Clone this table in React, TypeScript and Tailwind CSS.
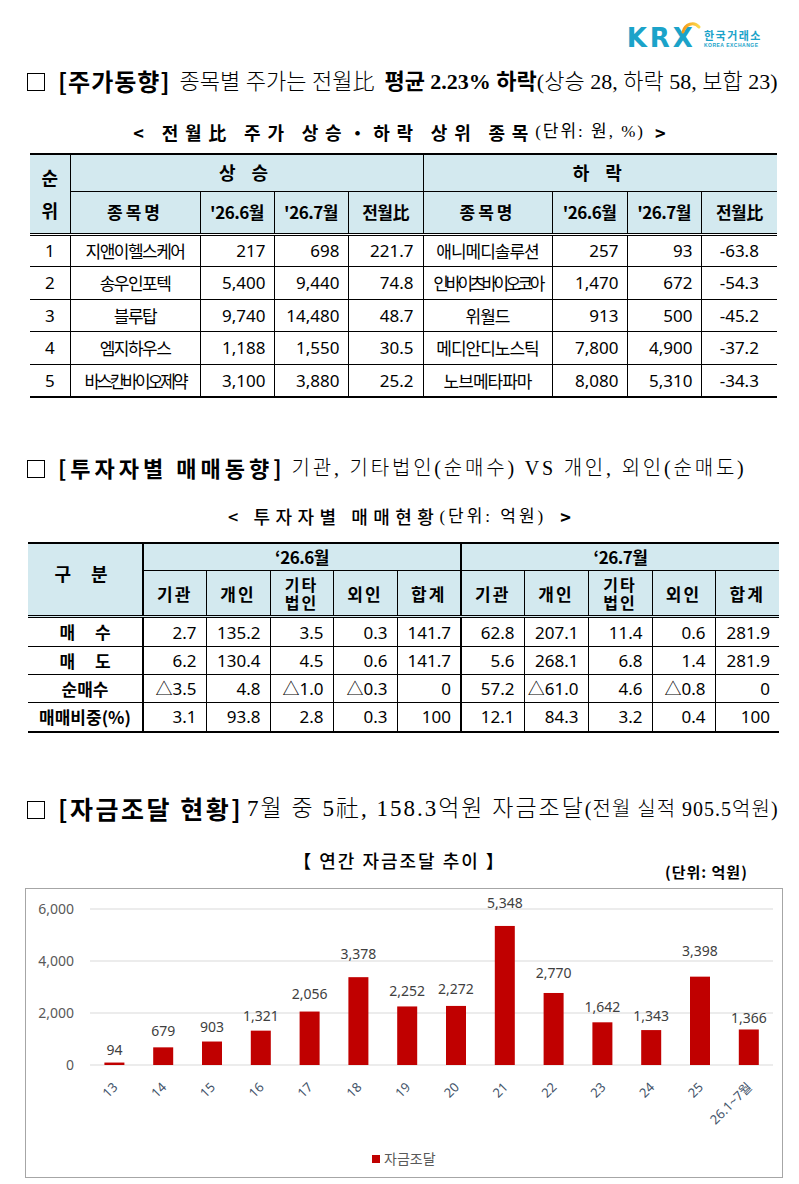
import React from "react";

const KR = "font-['Noto_Sans_CJK_KR',sans-serif]";
const MIX = "font-['Liberation_Serif','Noto_Sans_CJK_KR',serif]";
const NUM = "font-['Noto_Sans','Noto_Sans_CJK_KR',sans-serif]";

const HEAD_BG = "bg-[#d3e9ef]";

type Rise = { rank: number; name: string; jun: string; jul: string; pct: string; tight?: boolean };

const rise: Rise[] = [
  { rank: 1, name: "지앤이헬스케어", jun: "217", jul: "698", pct: "221.7" },
  { rank: 2, name: "송우인포텍", jun: "5,400", jul: "9,440", pct: "74.8" },
  { rank: 3, name: "블루탑", jun: "9,740", jul: "14,480", pct: "48.7" },
  { rank: 4, name: "엠지하우스", jun: "1,188", jul: "1,550", pct: "30.5" },
  { rank: 5, name: "바스칸바이오제약", jun: "3,100", jul: "3,880", pct: "25.2", tight: true },
];

const fall: Omit<Rise, "rank">[] = [
  { name: "애니메디솔루션", jun: "257", jul: "93", pct: "-63.8" },
  { name: "인바이츠바이오코아", jun: "1,470", jul: "672", pct: "-54.3", tight: true },
  { name: "위월드", jun: "913", jul: "500", pct: "-45.2" },
  { name: "메디안디노스틱", jun: "7,800", jul: "4,900", pct: "-37.2" },
  { name: "노브메타파마", jun: "8,080", jul: "5,310", pct: "-34.3" },
];

const investors = [
  { label: "매 수", wide: true, jun: ["2.7", "135.2", "3.5", "0.3", "141.7"], jul: ["62.8", "207.1", "11.4", "0.6", "281.9"] },
  { label: "매 도", wide: true, jun: ["6.2", "130.4", "4.5", "0.6", "141.7"], jul: ["5.6", "268.1", "6.8", "1.4", "281.9"] },
  { label: "순매수", jun: ["△3.5", "4.8", "△1.0", "△0.3", "0"], jul: ["57.2", "△61.0", "4.6", "△0.8", "0"] },
  { label: "매매비중(%)", jun: ["3.1", "93.8", "2.8", "0.3", "100"], jul: ["12.1", "84.3", "3.2", "0.4", "100"] },
];

const funding = [
  { x: "13", v: 94, ly: 1046 },
  { x: "14", v: 679, ly: 1027 },
  { x: "15", v: 903, ly: 1023 },
  { x: "16", v: 1321, ly: 1012 },
  { x: "17", v: 2056, ly: 990 },
  { x: "18", v: 3378, ly: 950 },
  { x: "19", v: 2252, ly: 987 },
  { x: "20", v: 2272, ly: 985 },
  { x: "21", v: 5348, ly: 899 },
  { x: "22", v: 2770, ly: 969 },
  { x: "23", v: 1642, ly: 1003 },
  { x: "24", v: 1343, ly: 1012 },
  { x: "25", v: 3398, ly: 947 },
  { x: "26.1~7월", v: 1366, ly: 1014 },
];

function Logo() {
  return (
    <div className="flex items-start">
      <div className="relative">
        <span className="font-['DejaVu_Sans',sans-serif] text-[26px] font-bold leading-[24px] tracking-[3px] text-[#1ba3c9]">
          KRX
        </span>
        <svg className="absolute -top-[6px] right-[-6px]" width="22" height="18" viewBox="0 0 22 18">
          <defs>
            <linearGradient id="arc" x1="0" y1="0" x2="1" y2="0">
              <stop offset="0" stopColor="#f39a1a" />
              <stop offset="1" stopColor="#fcd94c" />
            </linearGradient>
          </defs>
          <path d="M3 12 C5 4 14 1 19 7" fill="none" stroke="url(#arc)" strokeWidth="3" strokeLinecap="round" />
        </svg>
      </div>
      <div className="flex flex-col items-start pt-[3px] pl-[8px]">
        <span className={`${KR} text-[11px] font-bold leading-[12px] tracking-[1.5px] text-[#1ba3c9]`}>한국거래소</span>
        <span className="font-['Liberation_Sans',sans-serif] text-[5px] font-bold leading-[8px] tracking-[0.5px] text-[#1ba3c9]">
          KOREA EXCHANGE
        </span>
      </div>
    </div>
  );
}

function Box() {
  return <span className="mr-[13px] inline-block h-[18px] w-[18px] translate-y-[1px] border border-black" />;
}

function Th({
  children,
  className = "",
  colSpan,
  rowSpan,
}: {
  children: React.ReactNode;
  className?: string;
  colSpan?: number;
  rowSpan?: number;
}) {
  return (
    <th
      colSpan={colSpan}
      rowSpan={rowSpan}
      className={`${HEAD_BG} border border-black p-0 text-center font-bold text-black ${className}`}
    >
      {children}
    </th>
  );
}

function Td({ children, className = "" }: { children: React.ReactNode; className?: string }) {
  return <td className={`border border-black p-0 text-black ${className}`}>{children}</td>;
}

function PriceTable() {
  const cols = [40, 130, 74, 74, 75, 129, 75, 74, 76];
  return (
    <table className={`ml-[30px] w-[747px] table-fixed border-collapse ${KR}`}>
      <colgroup>
        {cols.map((w, i) => (
          <col key={i} style={{ width: w }} />
        ))}
      </colgroup>
      <thead>
        <tr className="h-[37px]">
          <Th rowSpan={2} className="border-t-2 border-b-[3px] border-l-0 border-double text-[18px] leading-[33px]">
            순<br />위
          </Th>
          <Th colSpan={4} className="border-t-2 border-t-black text-[18px] tracking-[6px]">
            상 승
          </Th>
          <Th colSpan={4} className="border-t-2 border-r-0 text-[18px] tracking-[6px]">
            하 락
          </Th>
        </tr>
        <tr className="h-[43px] text-[17px]">
          {["종목명", "'26.6월", "'26.7월", "전월比", "종목명", "'26.6월", "'26.7월", "전월比"].map((t, i) => (
            <Th
              key={i}
              className={`border-b-[3px] border-double ${i === 7 ? "border-r-0" : ""} ${
                t === "종목명" ? "tracking-[3px]" : "tracking-[-0.5px]"
              }`}
            >
              {t}
            </Th>
          ))}
        </tr>
      </thead>
      <tbody className="text-[17px]">
        {rise.map((r, i) => {
          const f = fall[i];
          const last = i === rise.length - 1 ? "border-b-2" : "";
          return (
            <tr key={r.rank} className="h-[32.6px]">
              <Td className={`border-l-0 text-center ${NUM} ${last}`}>{r.rank}</Td>
              <Td className={`text-center whitespace-nowrap ${r.tight ? "tracking-[-3px]" : "tracking-[-1.5px]"} ${last}`}>
                {r.name}
              </Td>
              <Td className={`pr-[8px] text-right ${NUM} ${last}`}>{r.jun}</Td>
              <Td className={`pr-[8px] text-right ${NUM} ${last}`}>{r.jul}</Td>
              <Td className={`pr-[9px] text-right ${NUM} ${last}`}>{r.pct}</Td>
              <Td className={`text-center whitespace-nowrap ${f.tight ? "tracking-[-3.6px]" : "tracking-[-1px]"} ${last}`}>
                {f.name}
              </Td>
              <Td className={`pr-[8px] text-right ${NUM} ${last}`}>{f.jun}</Td>
              <Td className={`pr-[8px] text-right ${NUM} ${last}`}>{f.jul}</Td>
              <Td className={`border-r-0 text-center ${NUM} ${last}`}>{f.pct}</Td>
            </tr>
          );
        })}
      </tbody>
    </table>
  );
}

function InvestorTable() {
  const cols = [115, 63, 64, 63, 64, 64, 63, 64, 64, 63, 64];
  const sub = ["기관", "개인", "기타\n법인", "외인", "합계"];
  return (
    <table className={`ml-[28px] w-[751px] table-fixed border-collapse ${KR}`}>
      <colgroup>
        {cols.map((w, i) => (
          <col key={i} style={{ width: w }} />
        ))}
      </colgroup>
      <thead>
        <tr className="h-[28px]">
          <Th rowSpan={2} className="border-t-2 border-r-2 border-b-[3px] border-l-0 border-double text-[18px] tracking-[8px]">
            <span className="relative -top-[6px]">구 분</span>
          </Th>
          <Th colSpan={5} className="border-t-2 border-r-2 text-[17px] tracking-[-0.5px]">
            ‘26.6월
          </Th>
          <Th colSpan={5} className="border-t-2 border-r-0 text-[17px] tracking-[-0.5px]">
            ‘26.7월
          </Th>
        </tr>
        <tr className="h-[46px] text-[17px]">
          {[...sub, ...sub].map((t, i) => (
            <Th
              key={i}
              className={`border-b-[3px] border-double tracking-[2px] ${i === 4 ? "border-r-2" : ""} ${
                i === 9 ? "border-r-0" : ""
              }`}
            >
              {t.includes("\n") ? (
                <span className="flex flex-col items-center text-[16px] leading-[18px]">
                  <span>기타</span>
                  <span>법인</span>
                </span>
              ) : (
                t
              )}
            </Th>
          ))}
        </tr>
      </thead>
      <tbody className="text-[17px]">
        {investors.map((r, i) => {
          const last = i === investors.length - 1 ? "border-b-2" : "";
          return (
            <tr key={r.label} className={i === 0 ? "h-[30px]" : i === 3 ? "h-[29px]" : "h-[28px]"}>
              <Td
                className={`border-l-0 border-r-2 text-center font-bold ${
                  r.wide ? "tracking-[8px] pl-[8px]" : "tracking-[0px]"
                } leading-[20px] ${last}`}
              >
                {r.label}
              </Td>
              {r.jun.map((v, j) => (
                <Td key={`a${j}`} className={`pr-[9px] text-right ${NUM} ${j === 4 ? "border-r-2" : ""} ${last}`}>
                  {v}
                </Td>
              ))}
              {r.jul.map((v, j) => (
                <Td key={`b${j}`} className={`pr-[9px] text-right ${NUM} ${j === 4 ? "border-r-0" : ""} ${last}`}>
                  {v}
                </Td>
              ))}
            </tr>
          );
        })}
      </tbody>
    </table>
  );
}

function FundingChart() {
  const x0 = 90;
  const step = 48.8;
  const y = (v: number) => 1061 - v * 0.026;
  const ticks = [0, 2000, 4000, 6000];
  return (
    <div className="mx-[25px] h-[290px] w-[758px] border border-[#a6a6a6] bg-white">
      <svg width="756" height="288" viewBox="26 885 756 288" className="block">
        {ticks.map((t) => (
          <g key={t}>
            <line x1={x0} x2={773} y1={y(t)} y2={y(t)} stroke="#d9d9d9" strokeWidth="1" />
            <text
              x={74}
              y={y(t) + 5}
              textAnchor="end"
              fontSize="14"
              fill="#595959"
              fontFamily="'Noto Sans', sans-serif"
            >
              {t.toLocaleString("en-US")}
            </text>
          </g>
        ))}
        {funding.map((d, i) => {
          const cx = x0 + (i + 0.5) * step;
          return (
            <g key={d.x}>
              <rect x={cx - 10} y={y(d.v)} width={20} height={1061 - y(d.v)} fill="#c00000" />
              <text
                x={cx}
                y={d.ly + 5}
                textAnchor="middle"
                fontSize="14"
                fill="#404040"
                fontFamily="'Noto Sans', sans-serif"
              >
                {d.v.toLocaleString("en-US")}
              </text>
              <text
                x={cx + 4}
                y={1084}
                textAnchor="end"
                fontSize="13"
                fill="#44546a"
                fontFamily="'Noto Sans','Noto Sans CJK KR', sans-serif"
                transform={`rotate(-45 ${cx + 4} 1084)`}
              >
                {d.x}
              </text>
            </g>
          );
        })}
        <rect x={372} y={1151} width={8} height={8} fill="#c00000" />
        <text x={384} y={1160} fontSize="14" fill="#595959" fontFamily="'Noto Sans CJK KR', sans-serif">
          자금조달
        </text>
      </svg>
    </div>
  );
}

export default function App() {
  return (
    <div className="relative h-[1184px] w-[799px] bg-white text-black">
      {/* Logo */}
      <div className="flex h-[56px] items-start justify-end pr-[37px] pt-[26px]">
        <Logo />
      </div>

      {/* Section 1 */}
      <div className={`flex h-[50px] items-center whitespace-nowrap pl-[27px] ${MIX} text-[22px]`}>
        <Box />
        <span className={`${KR} text-[24px] font-bold tracking-[1px]`}>[주가동향]</span>
        <span className="ml-[9px] font-light tracking-[0px]">종목별 주가는 전월比</span>
        <span className="ml-[10px] font-bold tracking-[0px]">평균 2.23% 하락</span>
        <span className="font-light tracking-[0px]">(상승 28, 하락 58, 보합 23)</span>
      </div>
      <div className={`flex h-[47px] items-center justify-center whitespace-nowrap pt-[5px] ${MIX}`}>
        <span className={`${KR} text-[18px] font-bold tracking-[6.8px]`}>{"< 전월比 주가 상승・하락 상위 종목"}</span>
        <span className="text-[17px] tracking-[2px]">(단위: 원, %)</span>
        <span className={`${KR} ml-[10px] text-[18px] font-bold`}>{">"}</span>
      </div>
      <PriceTable />

      {/* Section 2 */}
      <div className={`mt-[46px] flex h-[48px] items-center whitespace-nowrap pl-[27px] ${MIX} text-[20px]`}>
        <Box />
        <span className={`${KR} text-[22px] font-bold tracking-[4px]`}>[투자자별 매매동향]</span>
        <span className="ml-[6px] font-light tracking-[2.8px]">기관, 기타법인(순매수) VS 개인, 외인(순매도)</span>
      </div>
      <div className={`flex h-[50px] items-center justify-center whitespace-nowrap ${MIX}`}>
        <span className={`${KR} text-[18px] font-medium tracking-[5.5px]`}>{"< 투자자별 매매현황"}</span>
        <span className="text-[17px] tracking-[3px]">(단위: 억원)</span>
        <span className={`${KR} ml-[14px] text-[18px] font-bold`}>{">"}</span>
      </div>
      <InvestorTable />

      {/* Section 3 */}
      <div className={`mt-[52px] flex h-[48px] items-center whitespace-nowrap pl-[27px] ${MIX} text-[23px]`}>
        <Box />
        <span className={`${KR} text-[25px] font-bold tracking-[2.5px]`}>[자금조달 현황]</span>
        <span className="ml-[4px] font-light tracking-[2px]">7월 중 5社, 158.3억원 자금조달</span>
        <span className="text-[20px] font-light tracking-[1px]">(전월 실적 905.5억원)</span>
      </div>
      <div className="relative flex h-[55px] items-center justify-center">
        <span className={`${KR} text-[18px] font-medium tracking-[2px]`}>【 연간 자금조달 추이 】</span>
        <span className={`${KR} absolute left-[665px] top-[28px] text-[15px] font-bold tracking-[1px]`}>(단위: 억원)</span>
      </div>
      <FundingChart />
    </div>
  );
}
